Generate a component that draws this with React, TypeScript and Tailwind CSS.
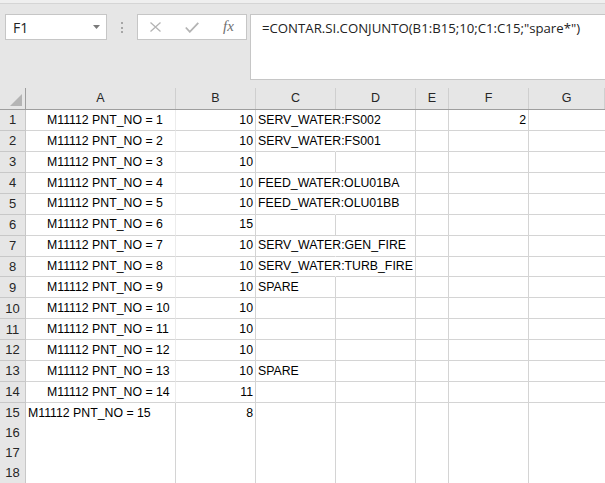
import React from 'react';

type RowData = { a?: string; indent?: boolean; b?: string; c?: string; f?: string };

const rows: RowData[] = [
  { a: 'M11112 PNT_NO = 1', indent: true, b: '10', c: 'SERV_WATER:FS002', f: '2' },
  { a: 'M11112 PNT_NO = 2', indent: true, b: '10', c: 'SERV_WATER:FS001' },
  { a: 'M11112 PNT_NO = 3', indent: true, b: '10' },
  { a: 'M11112 PNT_NO = 4', indent: true, b: '10', c: 'FEED_WATER:OLU01BA' },
  { a: 'M11112 PNT_NO = 5', indent: true, b: '10', c: 'FEED_WATER:OLU01BB' },
  { a: 'M11112 PNT_NO = 6', indent: true, b: '15' },
  { a: 'M11112 PNT_NO = 7', indent: true, b: '10', c: 'SERV_WATER:GEN_FIRE' },
  { a: 'M11112 PNT_NO = 8', indent: true, b: '10', c: 'SERV_WATER:TURB_FIRE' },
  { a: 'M11112 PNT_NO = 9', indent: true, b: '10', c: 'SPARE' },
  { a: 'M11112 PNT_NO = 10', indent: true, b: '10' },
  { a: 'M11112 PNT_NO = 11', indent: true, b: '10' },
  { a: 'M11112 PNT_NO = 12', indent: true, b: '10' },
  { a: 'M11112 PNT_NO = 13', indent: true, b: '10', c: 'SPARE' },
  { a: 'M11112 PNT_NO = 14', indent: true, b: '11' },
  { a: 'M11112 PNT_NO = 15', b: '8' },
  {},
  {},
  {},
];

const cols = ['A', 'B', 'C', 'D', 'E', 'F', 'G'];

const grid = 'grid grid-cols-[26px_150px_80px_80px_80px_33px_80px_1fr]';

function FormulaBar() {
  return (
    <div className="h-[88px] shrink-0">
      <div className="h-[4px] bg-[#efefef] border-b border-[#d5d5d5]" />
      <div className="flex items-start mt-[10px]">
        {/* name box */}
        <div className="ml-[5px] w-[102px] h-[26px] bg-white border border-[#c6c6c6] flex items-center justify-between pl-[7px] pr-[6px]">
          <span className="text-[14px] text-[#222] font-['Open_Sans',sans-serif]">F1</span>
          <svg width="7" height="4" viewBox="0 0 7 4">
            <path d="M0 0 H7 L3.5 4 Z" fill="#7a7a7a" />
          </svg>
        </div>

        {/* grip dots */}
        <div className="ml-[14px] mt-[8px] flex flex-col gap-[2.5px]">
          <div className="w-[2px] h-[2px] bg-[#a6a6a6]" />
          <div className="w-[2px] h-[2px] bg-[#a6a6a6]" />
          <div className="w-[2px] h-[2px] bg-[#a6a6a6]" />
        </div>

        {/* cancel / enter / fx */}
        <div className="ml-[14px] w-[110px] h-[26px] bg-white border border-[#c6c6c6] flex items-center">
          <svg className="ml-[12px]" width="11" height="10" viewBox="0 0 11 10">
            <path d="M0.5 0.5 L10.5 9.5 M10.5 0.5 L0.5 9.5" stroke="#b4b4b4" strokeWidth="1.3" fill="none" />
          </svg>
          <svg className="ml-[24px]" width="14" height="11" viewBox="0 0 14 11">
            <path d="M0.8 5.5 L4.8 9.8 L13.3 0.8" stroke="#b4b4b4" strokeWidth="1.8" fill="none" />
          </svg>
          <span className="ml-[24px] -mt-[1px] italic text-[15px] leading-none text-[#707070] font-['Liberation_Serif',serif]">
            fx
          </span>
        </div>

        {/* formula input */}
        <div className="ml-[3px] flex-1 h-[66px] bg-white border border-[#c6c6c6] border-r-0 pl-[11px] pt-[7px]">
          <div className="text-[13.2px] leading-none text-[#222] font-['Open_Sans',sans-serif] whitespace-nowrap">
            =CONTAR.SI.CONJUNTO(B1:B15;10;C1:C15;"spare*")
          </div>
        </div>
      </div>
    </div>
  );
}

function HeaderRow() {
  return (
    <div className={`${grid} h-[22px] bg-[#e6e6e6] border-b border-[#9e9e9e]`}>
      <div className="border-r border-[#9e9e9e] flex items-end justify-end pr-[3px] pb-[3px]">
        <svg width="12" height="12" viewBox="0 0 12 12">
          <path d="M12 0 V12 H0 Z" fill="#b4b4b4" />
        </svg>
      </div>
      {cols.map(c => (
        <div key={c} className="border-r border-[#cfcfcf] flex items-center justify-center text-[12.5px] text-[#262626]">
          {c}
        </div>
      ))}
    </div>
  );
}

function SheetRow({ n, r }: { n: number; r: RowData }) {
  const spill = !!r.c && r.c.length > 9;
  // rows 1-14 were given a taller height than the default
  const h = n <= 14 ? 'h-[21px]' : 'h-[20px]';
  return (
    <div className={`${grid} ${h} bg-white text-[12.3px] text-black`}>
      <div className="bg-[#e6e6e6] border-r border-[#ababab] border-b border-[#c8c8c8] flex items-center justify-center text-[13px] text-[#262626]">
        {n}
      </div>
      <div
        className={`border-b border-[#d4d4d4] border-r flex items-center whitespace-nowrap ${
          r.indent ? 'pl-[21px] border-r-[#ececec]' : 'pl-[2px] border-r-[#d4d4d4]'
        }`}
      >
        {r.a}
      </div>
      <div className="border-b border-r border-[#d4d4d4] flex items-center justify-end pr-[2px]">{r.b}</div>
      <div
        className={`border-b border-r flex items-center pl-[2px] whitespace-nowrap overflow-visible ${
          spill ? 'border-r-transparent border-b-[#d4d4d4]' : 'border-[#d4d4d4]'
        }`}
      >
        {r.c}
      </div>
      <div className="border-b border-r border-[#d4d4d4]" />
      <div className="border-b border-r border-[#d4d4d4]" />
      <div className="border-b border-r border-[#d4d4d4] flex items-center justify-end pr-[2px]">{r.f}</div>
      <div className="border-b border-[#d4d4d4]" />
    </div>
  );
}

export default function App() {
  return (
    <div className="w-[605px] h-[483px] overflow-hidden bg-[#e6e6e6] flex flex-col font-['Liberation_Sans',sans-serif]">
      <FormulaBar />
      <HeaderRow />
      {rows.map((r, i) => (
        <SheetRow key={i} n={i + 1} r={r} />
      ))}
    </div>
  );
}
